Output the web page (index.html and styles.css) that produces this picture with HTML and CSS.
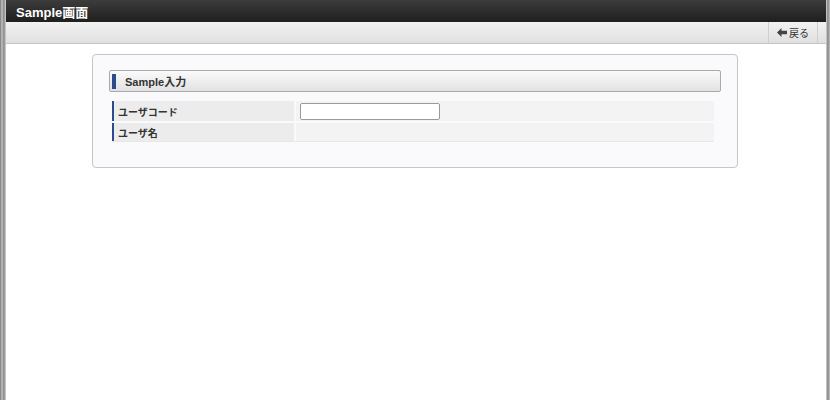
FILE: index.html
```html
<!DOCTYPE html>
<html lang="ja">
<head>
<meta charset="utf-8">
<title>Sample画面</title>
<link rel="stylesheet" href="styles.css">
</head>
<body>
<div class="frame">
  <div class="edge-left"></div>
  <div class="main">
    <header class="titlebar"><h1 class="title">Sample画面</h1></header>
    <div class="toolbar">
      <a class="back-btn" href="#"><svg class="arrow" width="10" height="9" viewBox="0 0 10 9"><path d="M0 4.5 L4.5 0 L4.5 2.8 L10 2.8 L10 6.2 L4.5 6.2 L4.5 9 Z" fill="#444"/></svg>戻る</a>
    </div>
    <div class="content">
      <div class="card">
        <div class="section-head"><span class="section-bar"></span><span class="section-title">Sample入力</span></div>
        <div class="form">
          <div class="row row-code">
            <div class="label">ユーザコード</div>
            <div class="value"><input class="text-input" type="text"></div>
          </div>
          <div class="row row-name">
            <div class="label">ユーザ名</div>
            <div class="value"></div>
          </div>
        </div>
      </div>
    </div>
  </div>
  <div class="edge-right"></div>
</div>
</body>
</html>
```
FILE: styles.css
```css
html, body {
  margin: 0;
  padding: 0;
  height: 100%;
  background: #fff;
  font-family: "Liberation Sans", Arial, "Noto Sans CJK JP", sans-serif;
}
.frame {
  display: flex;
  height: 400px;
  width: 830px;
}
.edge-left {
  width: 6px;
  flex: none;
  background: linear-gradient(to right, #7a7a7a 0, #9a9a9a 1px, #c8c8c8 2px, #9c9c9c 3px, #8a8a8a 4px, #b0b0b0 5px, #d8d8d8 6px);
}
.edge-right {
  width: 4px;
  flex: none;
  background: linear-gradient(to right, #e8e8e8 0, #9c9c9c 1px, #8c8c8c 2px, #a8a8a8 3px, #c0c0c0 4px);
}
.main {
  flex: 1;
  display: flex;
  flex-direction: column;
  min-width: 0;
}
.titlebar {
  height: 22px;
  background: linear-gradient(to bottom, #3c3c3c, #1f1f1f);
  display: flex;
  align-items: center;
  padding-left: 10px;
}
.title {
  margin: 0;
  color: #fff;
  font-size: 13px;
  font-weight: bold;
  font-family: "Liberation Sans", Arial, "Noto Sans CJK JP", sans-serif;
}
.toolbar {
  height: 21px;
  background: linear-gradient(to bottom, #f2f2f2, #e0e0e0);
  border-bottom: 1px solid #c4c4c4;
  display: flex;
  justify-content: flex-end;
  padding-right: 8px;
}
.back-btn {
  display: flex;
  align-items: center;
  gap: 1px;
  padding: 0 8px;
  border-left: 1px solid #d0d0d0;
  border-right: 1px solid #d0d0d0;
  font-size: 10px;
  color: #333;
  text-decoration: none;
  font-family: "Noto Sans CJK JP", sans-serif;
}
.arrow {
  margin-right: 1px;
}
.content {
  flex: 1;
  padding: 10px 88px 0 86px;
}
.card {
  border: 1px solid #c6c6c8;
  border-radius: 4px;
  background: #fafafc;
  padding: 15px 16px 24px 16px;
  height: 73px;
}
.section-head {
  height: 20px;
  border: 1px solid #a9a9a9;
  border-radius: 2px;
  background: linear-gradient(to bottom, #fafafa, #e2e2e2);
  display: flex;
  align-items: center;
  padding-left: 2px;
}
.section-bar {
  width: 4px;
  height: 15px;
  background: #2c4a8c;
}
.section-title {
  margin-left: 9px;
  font-size: 11px;
  font-weight: bold;
  color: #333;
  font-family: "Liberation Sans", Arial, "Noto Sans CJK JP", sans-serif;
}
.form {
  margin: 9px 7px 0 3px;
  display: flex;
  flex-direction: column;
  gap: 2px;
}
.row {
  display: flex;
  gap: 2px;
}
.row-code {
  height: 20px;
}
.row-name {
  height: 18px;
  border-bottom: 1px solid #e8e8e8;
}
.label {
  box-sizing: border-box;
  width: 182px;
  flex: none;
  background: #ececec;
  border-left: 2px solid #2c4a8c;
  padding-left: 4px;
  font-size: 10px;
  font-weight: bold;
  color: #333;
  display: flex;
  align-items: center;
  font-family: "Noto Sans CJK JP", sans-serif;
}
.value {
  flex: 1;
  background: #f3f3f3;
  display: flex;
  align-items: center;
  padding-left: 4px;
}
.text-input {
  width: 136px;
  height: 13px;
  border: 1px solid #9a9a9a;
  border-radius: 2px;
  background: #fff;
  padding: 1px;
  margin: 0;
  font-size: 10px;
}
```
